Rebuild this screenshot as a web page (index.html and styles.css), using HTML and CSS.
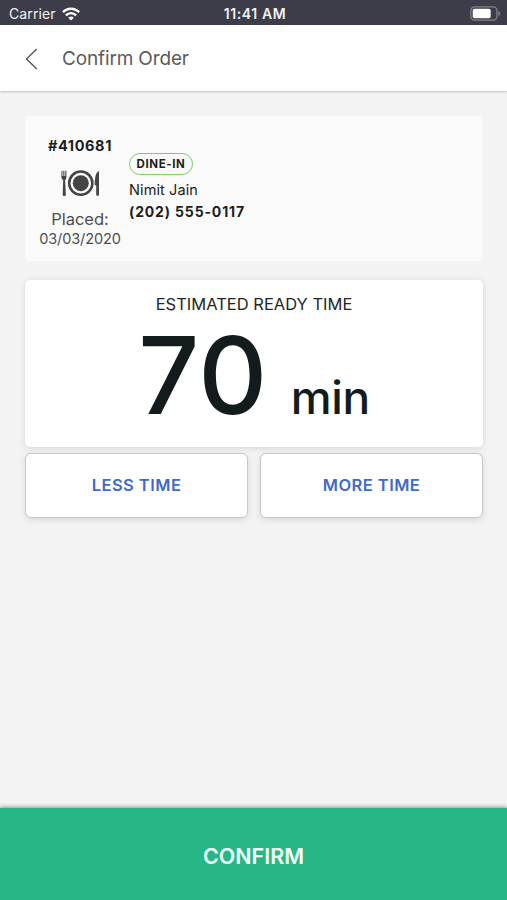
FILE: index.html
```html
<!DOCTYPE html>
<html lang="en">
<head>
    <title>Confirm Order</title>
    <meta charset="utf-8">
    <meta name="viewport" content="width=device-width, initial-scale=1">
    <link rel="stylesheet" href="styles.css">
</head>
<body>
<div class="app">
    <div class="status-bar">
        <div class="carrier">
            <span>Carrier</span>
            <svg class="wifi" width="18" height="14" viewBox="0 0 18 14" fill="none" stroke="#fff" stroke-width="2.4">
                <path d="M0.9 5.2C5.4 0.5 12.6 0.5 17.1 5.2"/>
                <path d="M3.9 8.3C6.8 5.4 11.2 5.4 14.1 8.3"/>
                <path d="M9 13.6L6.2 10.7C7.8 9.2 10.2 9.2 11.8 10.7Z" fill="#fff" stroke="none"/>
            </svg>
        </div>
        <span class="clock">11:41 AM</span>
        <svg class="battery" width="31" height="15" viewBox="0 0 31 15">
            <rect x="0.9" y="0.9" width="26" height="13.2" rx="3.6" fill="none" stroke="#85858d" stroke-width="1.2"/>
            <rect x="2.7" y="2.7" width="18" height="9.6" rx="2" fill="#fff"/>
            <path d="M28.4 5C30.8 5.8 30.8 9.2 28.4 10Z" fill="#85858d"/>
        </svg>
    </div>

    <div class="header">
        <svg class="back" width="13" height="22" viewBox="0 0 13 22" fill="none" stroke="#57575a" stroke-width="1.4">
            <path d="M11.8 1L1.5 11L11.8 21"/>
        </svg>
        <span class="title">Confirm Order</span>
    </div>

    <div class="content">
        <div class="order">
            <div class="summary">
                <div class="number">#410681</div>
                <svg class="dine" width="39" height="27" viewBox="0 0 39 27" fill="#444446">
                    <path d="M0.4 0.8H1.4V6H2.3V0.8H3.4V6H4.3V0.8H5.4V7C5.4 8.6 4.9 9.4 4.1 9.9L4.8 24.4C4.8 26.4 1.7 26.4 1.7 24.4L2.2 9.9C1 9.4 0.4 8.6 0.4 7Z"/>
                    <circle cx="19.8" cy="13.2" r="11.6" fill="none" stroke="#444446" stroke-width="2.5"/>
                    <circle cx="19.8" cy="13.2" r="8"/>
                    <path d="M38 1V24.5C38 26.4 35.2 26.4 35.2 24.5V15.2H33.8C33.6 8.5 34.6 2.4 38 1Z"/>
                </svg>
                <div class="placed">Placed:</div>
                <div class="date">03/03/2020</div>
            </div>
            <div class="customer">
                <div class="badge">DINE-IN</div>
                <div class="name">Nimit Jain</div>
                <div class="phone">(202) 555-0117</div>
            </div>
        </div>

        <div class="estimate">
            <div class="label">ESTIMATED READY TIME</div>
            <div class="time">
                <span class="value">70</span>
                <span class="unit">min</span>
            </div>
        </div>

        <div class="actions">
            <button class="less">LESS TIME</button>
            <button class="more">MORE TIME</button>
        </div>
    </div>

    <button class="confirm">CONFIRM</button>
</div>
</body>
</html>
```
FILE: styles.css
```css
html {
    font-family: Inter, "Liberation Sans", sans-serif;
}

body {
    margin: 0;
}

* {
    box-sizing: border-box;
}

button {
    font-family: inherit;
    margin: 0;
    padding: 0;
}

.app {
    display: flex;
    flex-direction: column;
    height: 900px;
    background: #f3f3f3;
    overflow: hidden;
}

.status-bar {
    display: grid;
    grid-template-columns: 1fr auto 1fr;
    align-items: center;
    height: 25px;
    padding: 2px 6px 0 9px;
    background: #3d3c49;
    color: #f1f1f4;
    font-size: 14px;
}

.carrier {
    display: flex;
    align-items: center;
    gap: 6px;
    letter-spacing: 0.1px;
}

.clock {
    font-size: 14px;
    font-weight: 600;
    letter-spacing: 0.6px;
    white-space: nowrap;
}

.battery {
    justify-self: end;
}

.header {
    display: flex;
    align-items: center;
    gap: 24px;
    height: 66px;
    padding: 1px 0 0 25px;
    background: #fff;
    box-shadow: 0 1px 2px rgba(0, 0, 0, 0.2);
}

.title {
    color: #5b5b5d;
    font-size: 19px;
    letter-spacing: -0.15px;
}

.content {
    flex: 1;
    padding: 25px 24px 0 25px;
}

.order {
    display: flex;
    height: 145px;
    padding-left: 10px;
    background: #fafafa;
    border-radius: 4px;
    color: #1c1e20;
}

.summary {
    display: flex;
    flex-direction: column;
    align-items: center;
    width: 90px;
    padding-top: 20px;
}

.number {
    font-size: 14.5px;
    font-weight: 700;
    line-height: 20px;
    letter-spacing: 0.6px;
}

.dine {
    margin-top: 14px;
}

.placed {
    margin-top: 12px;
    color: #4e4e50;
    font-size: 16.5px;
    line-height: 20px;
}

.date {
    color: #4e4e50;
    font-size: 14.5px;
    line-height: 20px;
    letter-spacing: -0.1px;
}

.customer {
    padding: 37px 0 0 4px;
}

.badge {
    width: 64px;
    height: 22px;
    border: 1.5px solid #7bcf63;
    border-radius: 11px;
    font-size: 11.5px;
    font-weight: 700;
    line-height: 20px;
    letter-spacing: 0.6px;
    text-align: center;
}

.name {
    margin-top: 4px;
    font-size: 14.5px;
    line-height: 22px;
    letter-spacing: 0.1px;
}

.phone {
    font-size: 14px;
    font-weight: 700;
    line-height: 22px;
    letter-spacing: 0.85px;
}

.estimate {
    height: 167px;
    margin-top: 19px;
    padding-top: 14px;
    background: #fff;
    border-radius: 5px;
    box-shadow: 0 1px 6px rgba(0, 0, 0, 0.13);
    text-align: center;
}

.label {
    color: #242628;
    font-size: 16.5px;
    line-height: 20px;
}

.time {
    display: flex;
    align-items: baseline;
    justify-content: center;
    gap: 23px;
    color: #131b1d;
    font-weight: 500;
    line-height: 122px;
}

.value {
    font-size: 107px;
    font-weight: 450;
    letter-spacing: 0.5px;
}

.unit {
    font-size: 46px;
    letter-spacing: -0.4px;
}

.actions {
    display: flex;
    gap: 12px;
    margin-top: 6px;
}

.less, .more {
    flex: 1;
    height: 65px;
    padding-bottom: 2px;
    background: #fff;
    border: 1px solid #c6c6c6;
    border-radius: 6px;
    box-shadow: 0 2px 7px rgba(0, 0, 0, 0.11);
    color: #4169c8;
    font-size: 16.5px;
    font-weight: 600;
    letter-spacing: 0.45px;
}

.confirm {
    height: 92px;
    padding-top: 3px;
    background: #27b786;
    border: 0;
    box-shadow: 0 -1px 4px rgba(0, 0, 0, 0.4);
    color: #effff9;
    font-size: 21.5px;
    font-weight: 600;
}
```
